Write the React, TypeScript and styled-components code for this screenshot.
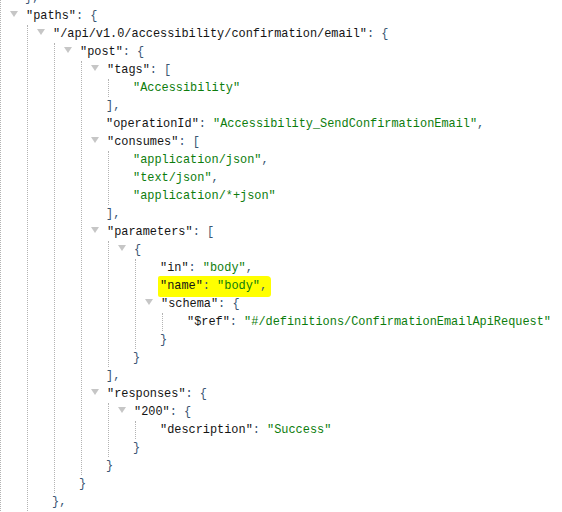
import React from "react";
import styled, { createGlobalStyle } from "styled-components";

const Global = createGlobalStyle`
  html, body { margin: 0; padding: 0; background: #ffffff; overflow: hidden; }
  body { font-family: "Liberation Mono", "DejaVu Sans Mono", monospace; }
`;

const Viewer = styled.div`
  width: 562px;
  height: 512px;
  overflow: hidden;
  font-family: "Liberation Mono", "DejaVu Sans Mono", monospace;
  font-size: 11.9px;
  color: #1b1b1b;
`;

const Scroll = styled.div`
  margin-top: -11.5px;
`;

const Block = styled.div<{ $root?: boolean }>`
  margin-left: ${(p) => (p.$root ? "0" : "2px")};
  border-left: 1px dotted #b3b3b3;
  padding-left: 24px;
`;

const Row = styled.div`
  height: 18px;
  line-height: 18px;
  white-space: pre;
`;

const Toggle = styled.span`
  display: inline-block;
  width: 0;
  height: 0;
  margin-left: -15px;
  margin-right: 8px;
  border-left: 4px solid transparent;
  border-right: 4px solid transparent;
  border-top: 6px solid #c6c6c6;
  vertical-align: middle;
  position: relative;
  top: -1px;
`;

const Key = styled.span`
  color: #141414;
`;

const Str = styled.span`
  color: #0d7d0d;
`;

const Punct = styled.span`
  color: #3b5673;
`;

const Mark = styled.span`
  background: #ffff00;
  padding: 3px 4px 4px 2px;
  margin-left: -2px;
  margin-right: -4px;
  border-radius: 2px 4px 3px 2px;
`;

type Json = string | Json[] | { [k: string]: Json };

const data: { [k: string]: Json } = {
  "/api/v1.0/accessibility/confirmation/email": {
    post: {
      tags: ["Accessibility"],
      operationId: "Accessibility_SendConfirmationEmail",
      consumes: ["application/json", "text/json", "application/*+json"],
      parameters: [
        {
          in: "body",
          name: "body",
          schema: {
            $ref: "#/definitions/ConfirmationEmailApiRequest",
          },
        },
      ],
      responses: {
        "200": {
          description: "Success",
        },
      },
    },
  },
};

function Entry({
  k,
  v,
  last,
  highlight,
  continues,
}: {
  k?: string;
  v: Json;
  last: boolean;
  highlight?: boolean;
  continues?: boolean;
}) {
  const comma = last ? "" : ",";
  const keyPart =
    k !== undefined ? (
      <>
        <Key>"{k}"</Key>
        <Punct>: </Punct>
      </>
    ) : null;

  if (typeof v === "string") {
    const content = (
      <>
        {keyPart}
        <Str>"{v}"</Str>
        <Punct>{comma}</Punct>
      </>
    );
    return <Row>{highlight ? <Mark>{content}</Mark> : content}</Row>;
  }

  const open = Array.isArray(v) ? "[" : "{";
  const close = Array.isArray(v) ? "]" : "}";
  const children: [string | undefined, Json][] = Array.isArray(v)
    ? v.map((c) => [undefined, c] as [undefined, Json])
    : Object.entries(v);

  return (
    <>
      <Row>
        <Toggle />
        {keyPart}
        <Punct>{open}</Punct>
      </Row>
      <Block>
        {children.map(([ck, cv], i) => (
          <Entry
            key={i}
            k={ck}
            v={cv}
            last={!continues && i === children.length - 1}
            highlight={ck === "name" && cv === "body"}
          />
        ))}
      </Block>
      {!continues && (
        <Row>
          <Punct>
            {close}
            {comma}
          </Punct>
        </Row>
      )}
    </>
  );
}

export default function App() {
  return (
    <>
      <Global />
      <Viewer>
        <Scroll>
          <Block $root>
            <Row>
              <Punct>{"},"}</Punct>
            </Row>
            <Entry k="paths" v={data} last={false} continues />
          </Block>
        </Scroll>
      </Viewer>
    </>
  );
}
